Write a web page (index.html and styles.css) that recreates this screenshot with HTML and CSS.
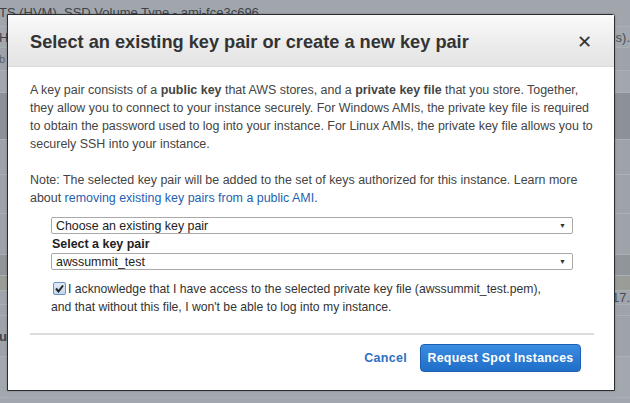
FILE: index.html
```html
<!DOCTYPE html>
<html>
<head>
<meta charset="utf-8">
<link rel="stylesheet" href="styles.css">
</head>
<body>
<div class="page">
  <div class="row r0"><span class="lt">TS (HVM), SSD Volume Type - ami-fce3c696</span></div>
  <div class="row r1"><span class="lt">H</span><span class="rt">s).</span></div>
  <div class="row r2"><span class="lt small">b</span></div>
  <div class="row r3"></div>
  <div class="row r4"></div>
  <div class="row r5"></div>
  <div class="row r6"></div>
  <div class="row r7"></div>
  <div class="row r8"></div>
  <div class="row r9"></div>
  <div class="row r10"><span class="rt">17.</span></div>
  <div class="row r11"></div>
  <div class="row r12"><span class="lt bold">u</span></div>
  <div class="row r13"></div>
</div>

<div class="modal">
  <div class="modal-head">
    <h1>Select an existing key pair or create a new key pair</h1>
    <span class="close">&#x2715;</span>
  </div>
  <div class="modal-body">
    <p>A key pair consists of a <b>public key</b> that AWS stores, and a <b>private key file</b> that you store. Together, they allow you to connect to your instance securely. For Windows AMIs, the private key file is required to obtain the password used to log into your instance. For Linux AMIs, the private key file allows you to securely SSH into your instance.</p>
    <p class="note">Note: The selected key pair will be added to the set of keys authorized for this instance. Learn more about <a href="#">removing existing key pairs from a public AMI</a>.</p>
    <div class="form">
      <div class="select"><span>Choose an existing key pair</span><span class="arrow">&#9660;</span></div>
      <div class="label">Select a key pair</div>
      <div class="select"><span>awssummit_test</span><span class="arrow">&#9660;</span></div>
      <div class="ack">
        <span class="cb"><svg width="11" height="11" viewBox="0 0 11 11"><path d="M2 5.5 L4.5 8.5 L9 2.5" fill="none" stroke="#222" stroke-width="2"/></svg></span>I acknowledge that I have access to the selected private key file (awssummit_test.pem), and that without this file, I won't be able to log into my instance.
      </div>
    </div>
  </div>
  <div class="modal-foot">
    <a class="cancel" href="#">Cancel</a>
    <button class="primary">Request Spot Instances</button>
  </div>
</div>
</body>
</html>
```

FILE: styles.css
```css
html, body {
  margin: 0;
  padding: 0;
}
body {
  width: 630px;
  height: 403px;
  overflow: hidden;
  background: #a2a7ae;
  font-family: "Liberation Sans", Arial, sans-serif;
  position: relative;
}
.page {
  display: flex;
  flex-direction: column;
}
.row {
  display: flex;
  align-items: center;
  border-bottom: 1px solid #aab0b6;
  color: #3e4247;
  font-size: 13px;
}
.lt { margin-left: -1px; }
.rt { margin-left: auto; color: #4a4f55; }
.small { font-size: 11px; color: #5a5f66; }
.bold { font-weight: bold; }
.r0 { height: 26px; background: #a1a6ad; align-items: flex-end; }
.r0 .lt { margin-bottom: 6px; }
.r1 { height: 20px; background: #a3a8af; }
.r2 { height: 22px; background: #9ea3aa; }
.r3 { height: 21px; background: #a2a7ae; }
.r4 { height: 46px; background: #8c9198; }
.r5 { height: 34px; background: #9ea3aa; }
.r6 { height: 38px; background: #9ea3aa; }
.r7 { height: 40px; background: #9ea3aa; }
.r8 { height: 20px; background: #8f9599; }
.r9 { height: 14px; background: #9a9d97; }
.r10 { height: 13px; background: #a0a5ac; }
.r11 { height: 10px; background: #9ea3aa; }
.r12 { height: 40px; background: #9ea3aa; }
.r13 { height: 40px; background: #a3a8af; }

.modal {
  position: absolute;
  left: 7px;
  top: 14px;
  width: 606px;
  height: 375px;
  background: #fff;
  border: 1px solid #2a2c30;
  border-radius: 0 3px 0 0;
  box-shadow: 0 0 2px rgba(0,0,0,0.3);
  display: flex;
  flex-direction: column;
}
.modal-head {
  height: 51px;
  background: linear-gradient(#fafafa 0%, #f3f3f3 30%, #ebebeb 60%, #e4e4e4 100%);
  border-bottom: 1px solid #dcdcdc;
  display: flex;
  align-items: center;
  justify-content: space-between;
  padding: 0 22px 0 22px;
}
.modal-head h1 {
  margin: 0;
  font-size: 18.2px;
  font-weight: bold;
  color: #333;
  padding-top: 3px;
}
.close {
  font-size: 18px;
  color: #333;
  padding-top: 3px;
}
.modal-body {
  font-size: 12.45px;
  color: #444;
  line-height: 18px;
  border-bottom: 2px solid #dcdcdc;
  margin: 0 20px 0 22px;
  padding: 14px 0 17px 0;
}
.modal-body p {
  margin: 0 0 18px 0;
}
.modal-body p.note { margin-bottom: 10px; }
.modal-body a {
  color: #1f5fb0;
  text-decoration: none;
}
.form {
  margin-left: 21px;
  margin-right: 21px;
}
.select {
  height: 15px;
  border: 1px solid #a9a9a9;
  border-radius: 2px;
  display: flex;
  justify-content: space-between;
  align-items: center;
  padding: 0 6px 0 4px;
  color: #222;
  font-size: 12.4px;
}
.arrow {
  font-size: 7px;
  color: #333;
}
.label {
  font-weight: bold;
  color: #222;
  margin-top: 2px;
  margin-left: 1px;
  line-height: 17px;
}
.ack {
  margin-top: 10px;
  margin-right: 28px;
  color: #333;
  font-size: 12.2px;
  line-height: 18px;
}
.cb {
  display: inline-block;
  width: 11px;
  height: 11px;
  border: 1px solid #6a90c4;
  background: linear-gradient(#dfeaf7, #c4d7ef);
  border-radius: 2px;
  vertical-align: -2px;
  margin: 0 2px 0 2px;
}
.cb svg { display: block; }
.modal-foot {
  display: flex;
  justify-content: flex-end;
  align-items: center;
  gap: 13px;
  padding: 9px 33px 0 0;
}
.cancel {
  font-family: "Liberation Sans", Arial, sans-serif;
  font-weight: bold;
  font-size: 12.5px;
  letter-spacing: 0.3px;
  color: #2d6fc4;
  text-decoration: none;
}
.primary {
  height: 28px;
  width: 161px;
  border: 1px solid #1d5fb3;
  border-radius: 4px;
  background: linear-gradient(#3a8ce0, #1f6ec8);
  color: #fff;
  font-family: "Liberation Sans", Arial, sans-serif;
  font-weight: bold;
  font-size: 12.3px;
  letter-spacing: 0.3px;
  padding: 0;
}
```
